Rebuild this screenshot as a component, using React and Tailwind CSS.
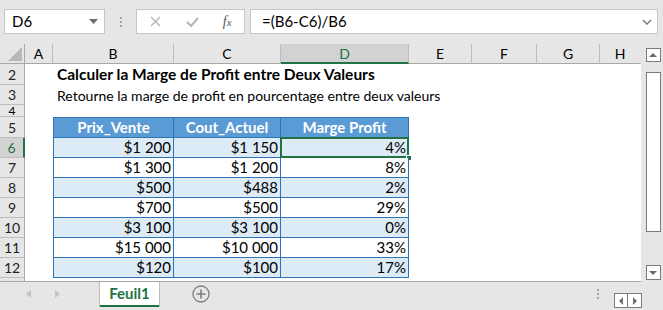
import React from "react";

const cols = [
  { k: "A", w: "w-[28px]" },
  { k: "B", w: "w-[121px]" },
  { k: "C", w: "w-[107px]" },
  { k: "D", w: "w-[128px]" },
  { k: "E", w: "w-[63px]" },
  { k: "F", w: "w-[65px]" },
  { k: "G", w: "w-[63px]" },
  { k: "H", w: "w-[41px]" },
];

const data = [
  ["$1 200", "$1 150", "4%"],
  ["$1 300", "$1 200", "8%"],
  ["$500", "$488", "2%"],
  ["$700", "$500", "29%"],
  ["$3 100", "$3 100", "0%"],
  ["$15 000", "$10 000", "33%"],
  ["$120", "$100", "17%"],
];

const font = { fontFamily: "Lato, 'Liberation Sans', sans-serif" };

function RowHead({ n, h, active }) {
  return (
    <div
      className={`w-[25px] ${h} shrink-0 flex items-center justify-center border-b border-r text-[14px] ${
        active
          ? "bg-[#d2d2d2] text-[#217346] border-b-[#bdbdbd] border-r-2 border-r-[#217346]"
          : "bg-[#e6e6e6] text-[#222] border-b-[#bdbdbd] border-r-[#a8a8a8]"
      }`}
    >
      {n}
    </div>
  );
}

export default function App() {
  return (
    <div className="w-[663px] h-[310px] bg-[#e6e6e6] overflow-hidden flex flex-col text-black" style={font}>
      {/* formula bar */}
      <div className="h-[44px] flex items-start pt-[9px] pl-[4px] gap-0 shrink-0">
        <div className="w-[101px] h-[25px] bg-white border border-[#c6c6c6] flex items-center justify-between pl-[7px] pr-[6px] text-[15px]">
          <span>D6</span>
          <svg width="9" height="5" viewBox="0 0 9 5"><path d="M0 0 L9 0 L4.5 5 Z" fill="#6d6d6d" /></svg>
        </div>
        <div className="w-[31px] h-[25px] flex flex-col items-center justify-center gap-[2px]">
          <span className="w-[2px] h-[2px] bg-[#a6a6a6]" />
          <span className="w-[2px] h-[2px] bg-[#a6a6a6]" />
          <span className="w-[2px] h-[2px] bg-[#a6a6a6]" />
        </div>
        <div className="w-[109px] h-[25px] bg-white border border-[#c6c6c6] flex items-center">
          <div className="w-[38px] flex justify-center">
            <svg width="11" height="11" viewBox="0 0 11 11"><path d="M1 1 L10 10 M10 1 L1 10" stroke="#b5b5b5" strokeWidth="1.4" /></svg>
          </div>
          <div className="w-[36px] flex justify-center">
            <svg width="13" height="10" viewBox="0 0 13 10"><path d="M1 5 L5 9 L12 1" stroke="#b5b5b5" strokeWidth="2" fill="none" /></svg>
          </div>
          <div className="w-[34px] flex justify-center text-[14px] italic text-[#555]" style={{ fontFamily: "'Liberation Serif', serif" }}>
            <span>f</span><span className="text-[11px] mt-[3px]">x</span>
          </div>
        </div>
        <div className="w-[5px]" />
        <div className="w-[408px] h-[25px] bg-white border border-[#c6c6c6] flex items-center justify-between pl-[11px] pr-[5px] text-[15px]">
          <span>=(B6-C6)/B6</span>
          <svg width="10" height="6" viewBox="0 0 10 6"><path d="M1 1 L5 5 L9 1" stroke="#7a7a7a" strokeWidth="1.5" fill="none" /></svg>
        </div>
      </div>

      {/* sheet */}
      <div className="flex h-[238px] shrink-0">
        <div className="w-[641px] flex flex-col bg-white border-b border-[#a8a8a8] overflow-hidden">
          {/* column header */}
          <div className="flex h-[20px] shrink-0">
            <div className="w-[25px] h-[20px] bg-[#e6e6e6] border-r border-b border-[#a8a8a8] flex items-end justify-end p-[2px]">
              <svg width="14" height="14" viewBox="0 0 14 14"><path d="M14 0 L14 14 L0 14 Z" fill="#b8b8b8" /></svg>
            </div>
            {cols.map((c) => (
              <div
                key={c.k}
                className={`${c.w} h-[20px] shrink-0 flex items-center justify-center text-[14px] border-r ${
                  c.k === "D"
                    ? "bg-[#d2d2d2] text-[#217346] border-r-[#bdbdbd] border-b-2 border-b-[#217346]"
                    : c.k === "H"
                    ? "bg-[#e6e6e6] border-r-[#e6e6e6] border-b border-b-[#a8a8a8]"
                    : "bg-[#e6e6e6] border-r-[#bdbdbd] border-b border-b-[#a8a8a8]"
                }`}
              >
                {c.k}
              </div>
            ))}
          </div>

          {/* row 2 */}
          <div className="flex h-[21px] shrink-0">
            <RowHead n="2" h="h-[21px]" />
            <div className="w-[28px]" />
            <div className="pl-[4px] flex items-center whitespace-nowrap text-[15.5px] font-bold">
              Calculer la Marge de Profit entre Deux Valeurs
            </div>
          </div>
          {/* row 3 */}
          <div className="flex h-[20px] shrink-0">
            <RowHead n="3" h="h-[20px]" />
            <div className="w-[28px]" />
            <div className="pl-[4px] flex items-center whitespace-nowrap text-[14px]">
              Retourne la marge de profit en pourcentage entre deux valeurs
            </div>
          </div>
          {/* row 4 */}
          <div className="flex h-[12px] shrink-0">
            <div className="w-[25px] h-[12px] shrink-0 flex items-center justify-center border-b border-r bg-[#e6e6e6] border-b-[#bdbdbd] border-r-[#a8a8a8] text-[12px] leading-[11px] overflow-hidden">
              4
            </div>
          </div>
          {/* row 5 header */}
          <div className="flex h-[21px] shrink-0">
            <RowHead n="5" h="h-[21px]" />
            <div className="w-[28px] shrink-0" />
            <div className="w-[121px] shrink-0 bg-[#5b9bd5] border border-[#2e75b6] flex items-center justify-center text-white font-bold text-[15px]">Prix_Vente</div>
            <div className="w-[107px] shrink-0 bg-[#5b9bd5] border-y border-r border-[#2e75b6] flex items-center justify-center text-white font-bold text-[15px]">Cout_Actuel</div>
            <div className="w-[128px] shrink-0 bg-[#5b9bd5] border-y border-r border-[#2e75b6] flex items-center justify-center text-white font-bold text-[15px]">Marge Profit</div>
          </div>
          {data.map((r, i) => {
            const n = i + 6;
            const bg = i % 2 === 0 ? "bg-[#ddebf7]" : "bg-white";
            return (
              <div key={n} className="flex h-[20px] shrink-0">
                <RowHead n={String(n)} h="h-[20px]" active={n === 6} />
                <div className="w-[28px] shrink-0" />
                <div className={`w-[121px] shrink-0 ${bg} border-l border-r border-b border-[#2e75b6] flex items-center justify-end pr-[2px] text-[15px]`}>{r[0]}</div>
                <div className={`w-[107px] shrink-0 ${bg} border-r border-b border-[#2e75b6] flex items-center justify-end pr-[2px] text-[15px]`}>{r[1]}</div>
                <div className={`w-[128px] shrink-0 ${bg} border-r border-b border-[#2e75b6] flex items-center justify-end pr-[2px] text-[15px] relative`}>
                  {r[2]}
                  {n === 6 && (
                    <>
                      <div className="absolute -left-[1px] -top-[1px] w-[129px] h-[21px] border-2 border-[#217346]" />
                      <div className="absolute -right-[4px] -bottom-[4px] w-[6px] h-[6px] bg-[#217346] border border-white" />
                    </>
                  )}
                </div>
              </div>
            );
          })}
          <div className="flex h-[4px] shrink-0">
            <div className="w-[25px] h-[4px] bg-[#e6e6e6] border-r border-[#a8a8a8]" />
          </div>
        </div>
        {/* vertical scrollbar */}
        <div className="w-[22px] bg-[#e6e6e6] flex flex-col items-center pt-[4px] pb-[2px] pl-[2px]">
          <div className="w-[15px] h-[14px] bg-white border border-[#7a7a7a] flex items-center justify-center">
            <svg width="8" height="4" viewBox="0 0 8 4"><path d="M0 4 L8 4 L4 0 Z" fill="#6d6d6d" /></svg>
          </div>
          <div className="w-[15px] h-[10px]" />
          <div className="w-[15px] h-[160px] bg-white border border-[#7a7a7a]" />
          <div className="flex-1" />
          <div className="w-[15px] h-[15px] bg-white border border-[#7a7a7a] flex items-center justify-center">
            <svg width="8" height="4" viewBox="0 0 8 4"><path d="M0 0 L8 0 L4 4 Z" fill="#6d6d6d" /></svg>
          </div>
        </div>
      </div>

      {/* tab bar */}
      <div className="flex h-[28px] items-start shrink-0">
        <div className="w-[99px] h-[24px] flex items-center pl-[26px] gap-[24px]">
          <svg width="5" height="8" viewBox="0 0 5 8"><path d="M5 0 L5 8 L0 4 Z" fill="#c3c3c3" /></svg>
          <svg width="5" height="8" viewBox="0 0 5 8"><path d="M0 0 L0 8 L5 4 Z" fill="#c3c3c3" /></svg>
        </div>
        <div className="w-[61px] h-[25px] bg-white border-x border-[#bdbdbd] flex flex-col">
          <div className="flex-1 flex items-center justify-center text-[#217346] font-bold text-[15px]">Feuil1</div>
          <div className="h-[3px] bg-[#217346]" />
        </div>
        <div className="w-[81px] h-[24px] flex items-center justify-center">
          <svg width="18" height="18" viewBox="0 0 18 18">
            <circle cx="9" cy="9" r="8" fill="none" stroke="#7d7d7d" strokeWidth="1.3" />
            <path d="M9 4.5 V13.5 M4.5 9 H13.5" stroke="#7d7d7d" strokeWidth="1.6" />
          </svg>
        </div>
        <div className="flex-1" />
        <div className="h-[24px] flex items-center mr-[21px]">
          <div className="flex flex-col gap-[2px] mr-[15px]">
            <span className="w-[2px] h-[2px] bg-[#a6a6a6]" />
            <span className="w-[2px] h-[2px] bg-[#a6a6a6]" />
            <span className="w-[2px] h-[2px] bg-[#a6a6a6]" />
          </div>
          <div className="flex mt-[13px] h-[15px]">
            <div className="w-[14px] h-[15px] bg-white border border-[#7a7a7a] flex items-center justify-center">
              <svg width="4" height="8" viewBox="0 0 4 8"><path d="M4 0 L4 8 L0 4 Z" fill="#6d6d6d" /></svg>
            </div>
            <div className="w-[14px] h-[15px] bg-white border border-l-0 border-[#7a7a7a] flex items-center justify-center">
              <svg width="4" height="8" viewBox="0 0 4 8"><path d="M0 0 L0 8 L4 4 Z" fill="#6d6d6d" /></svg>
            </div>
          </div>
        </div>
      </div>
    </div>
  );
}
